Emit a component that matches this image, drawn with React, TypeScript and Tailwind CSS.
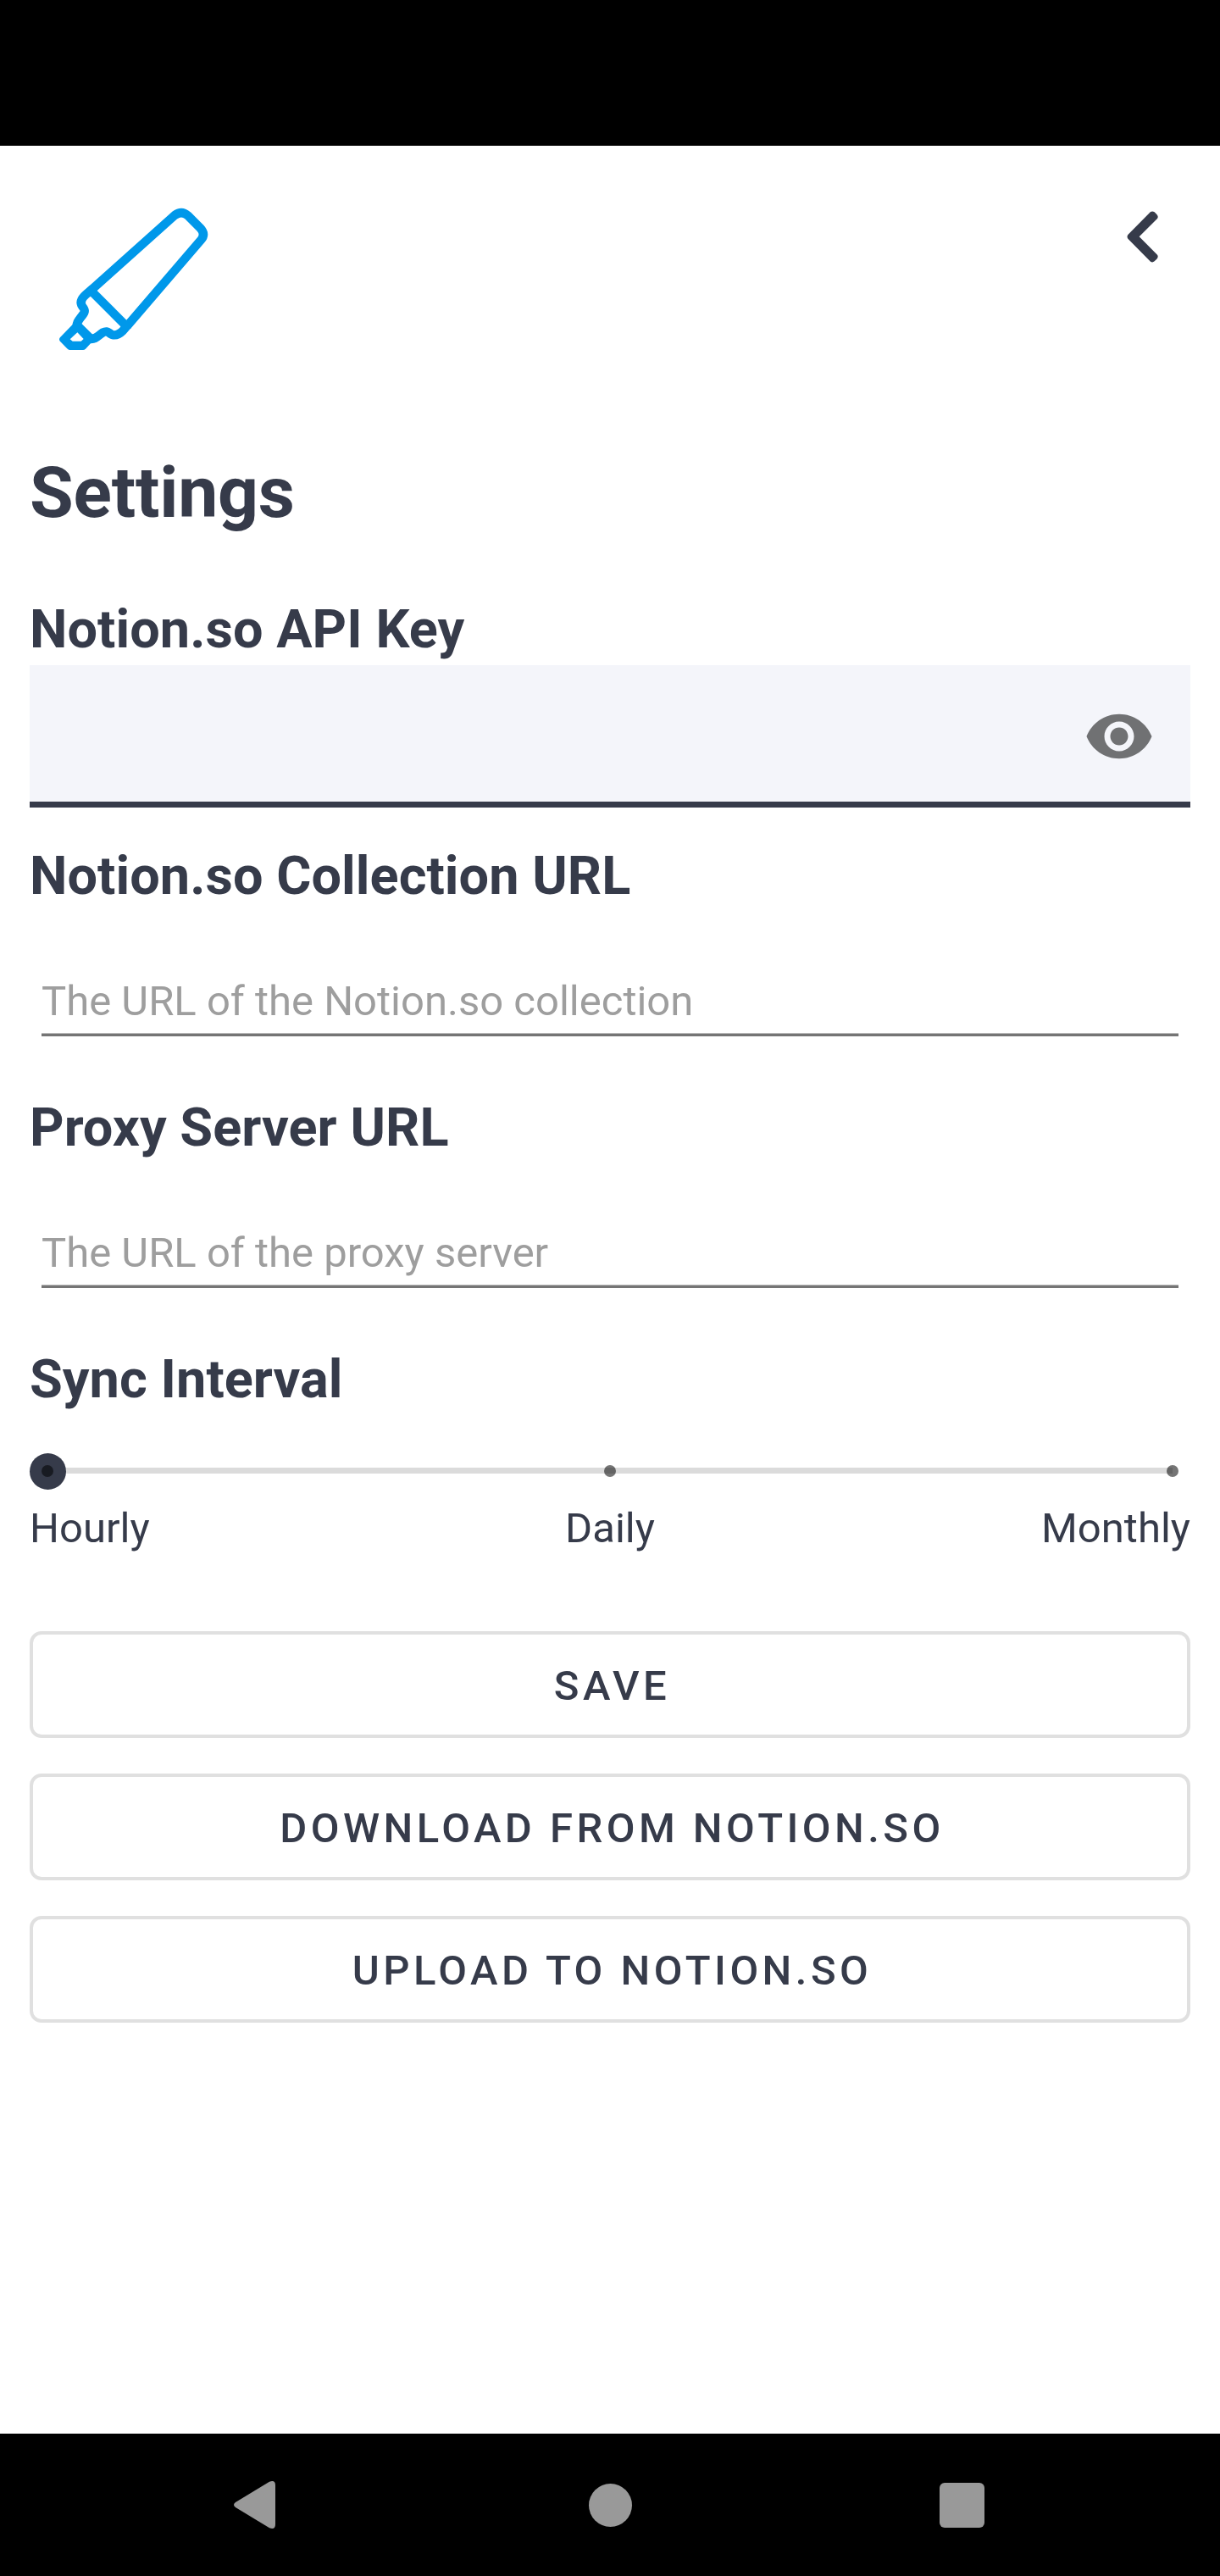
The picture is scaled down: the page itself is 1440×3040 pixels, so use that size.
import React from "react";

function MarkerLogo() {
  return (
    <svg width="240" height="220" viewBox="0 0 720 660" fill="none" stroke="#0098ea" strokeWidth="31">
      <path d="M206 364L499 102Q523 84 545 103L589 147Q609 169 592 189L331 493" />
      <path d="M198 365L326 493" />
      <path d="M207 363L184 383Q159 405 171 424C182 438 182 443 172 456C158 475 151 480 152 496" />
      <path d="M333 490L315 511Q296 530 277 525C262 517 260 509 243 518C223 532 218 541 201 540" />
      <path
        d="M137 489L163 480L208 524L201 556L183 575Q179 579 174 579H128Q123 579 119 575L94 550Q86 541 94 533ZM154 517L128 541L137 548H167L176 540Z"
        fill="#0098ea"
        fillRule="evenodd"
        stroke="none"
      />
    </svg>
  );
}

function BackIcon() {
  return (
    <svg width="37" height="61" viewBox="0 0 111 183" fill="#363b4a">
      <path d="M84 3Q91 -1 98 4L106 12Q113 20 108 27L44 91L108 155Q113 162 106 170L98 178Q91 184 84 179L4 98Q-1 91 4 84Z" />
    </svg>
  );
}

function Label({ children, className }: { children: React.ReactNode; className: string }) {
  return (
    <h2 className={`h-[74px] text-[63px] leading-[74px] font-bold tracking-[0.05px] ${className}`}>{children}</h2>
  );
}

function UrlField({ placeholder }: { placeholder: string }) {
  return (
    <div className="mx-[14px] mt-[82px]">
      <input
        className="block h-[58px] w-full p-0 text-[49px] leading-[58px] outline-none placeholder:text-[#9e9e9e] placeholder:opacity-100"
        placeholder={placeholder}
      />
      <div className="mt-[8px] h-1 border-t border-[#bbbbbb] bg-[#757575]" />
    </div>
  );
}

function OutlineButton({ children }: { children: React.ReactNode }) {
  return (
    <button className="flex h-[126px] w-full items-center justify-center rounded-[14px] border-4 border-[#e0e0e0] pt-1 pl-[5px] text-[49px] leading-[58px] font-medium tracking-[4.46px]">
      {children}
    </button>
  );
}

export default function App() {
  return (
    <div className="flex h-[3040px] w-[1440px] flex-col overflow-hidden bg-white font-[Roboto,sans-serif] text-[#363b4a]">
      <div className="h-[172px] shrink-0 bg-black" />
      <header className="flex h-[361px] shrink-0 items-start justify-between pl-10 pr-[73px]">
        <div className="mt-12">
          <MarkerLogo />
        </div>
        <button className="mt-[77px]" aria-label="Back">
          <BackIcon />
        </button>
      </header>

      <main className="flex-1 px-[35px]">
        <h1 className="h-[98px] text-[84px] leading-[98px] font-bold tracking-[-0.2px]">Settings</h1>

        <Label className="mt-[75px]">Notion.so API Key</Label>
        <div className="mt-[5px] flex h-[168px] items-center justify-end border-b-[7px] border-[#363b4a] bg-[#f4f5fa] pr-[42px]">
          <svg className="mt-[7px]" width="84" height="84" viewBox="0 0 24 24" fill="#707173">
            <path d="M12 4.5C7 4.5 2.73 7.61 1 12c1.73 4.39 6 7.5 11 7.5s9.27-3.11 11-7.5c-1.73-4.39-6-7.5-11-7.5zM12 17c-2.76 0-5-2.24-5-5s2.24-5 5-5 5 2.24 5 5-2.24 5-5 5zm0-8c-1.66 0-3 1.34-3 3s1.34 3 3 3 3-1.34 3-3-1.34-3-3-3z" />
          </svg>
        </div>

        <Label className="mt-[44px]">Notion.so Collection URL</Label>
        <UrlField placeholder="The URL of the Notion.so collection" />

        <Label className="mt-[71px]">Proxy Server URL</Label>
        <UrlField placeholder="The URL of the proxy server" />

        <Label className="mt-[71px]">Sync Interval</Label>
        <div className="relative mt-[50px] flex h-[42px] items-center justify-between px-[14px]">
          <div className="absolute top-[17px] right-[21px] left-[21px] h-[7px] bg-[#dbdbdb]" />
          <div className="absolute top-0 left-0 size-[43px] rounded-full bg-[#363b4a]" />
          <div className="relative size-[14px] rounded-full bg-black/54" />
          <div className="relative size-[14px] rounded-full bg-black/54" />
          <div className="relative size-[14px] rounded-full bg-black/54" />
        </div>
        <div className="mt-[18px] grid grid-cols-3 text-[49px] leading-[58px]">
          <span>Hourly</span>
          <span className="text-center">Daily</span>
          <span className="text-right">Monthly</span>
        </div>

        <div className="mt-[92px] flex flex-col gap-[42px]">
          <OutlineButton>SAVE</OutlineButton>
          <OutlineButton>DOWNLOAD FROM NOTION.SO</OutlineButton>
          <OutlineButton>UPLOAD TO NOTION.SO</OutlineButton>
        </div>
      </main>

      <nav className="flex h-[168px] shrink-0 items-center justify-between bg-black pr-[278px] pl-[276px]">
        <svg width="50" height="58" viewBox="0 0 50 58" fill="#999999">
          <path d="M2 26L42 1.700Q49 -1 49 6V52Q49 59 42 56.300L2 32Q-2 29 2 26Z" />
        </svg>
        <div className="ml-[5px] size-[51px] rounded-full bg-[#999999]" />
        <div className="size-[53px] rounded-[6px] bg-[#999999]" />
      </nav>
    </div>
  );
}
